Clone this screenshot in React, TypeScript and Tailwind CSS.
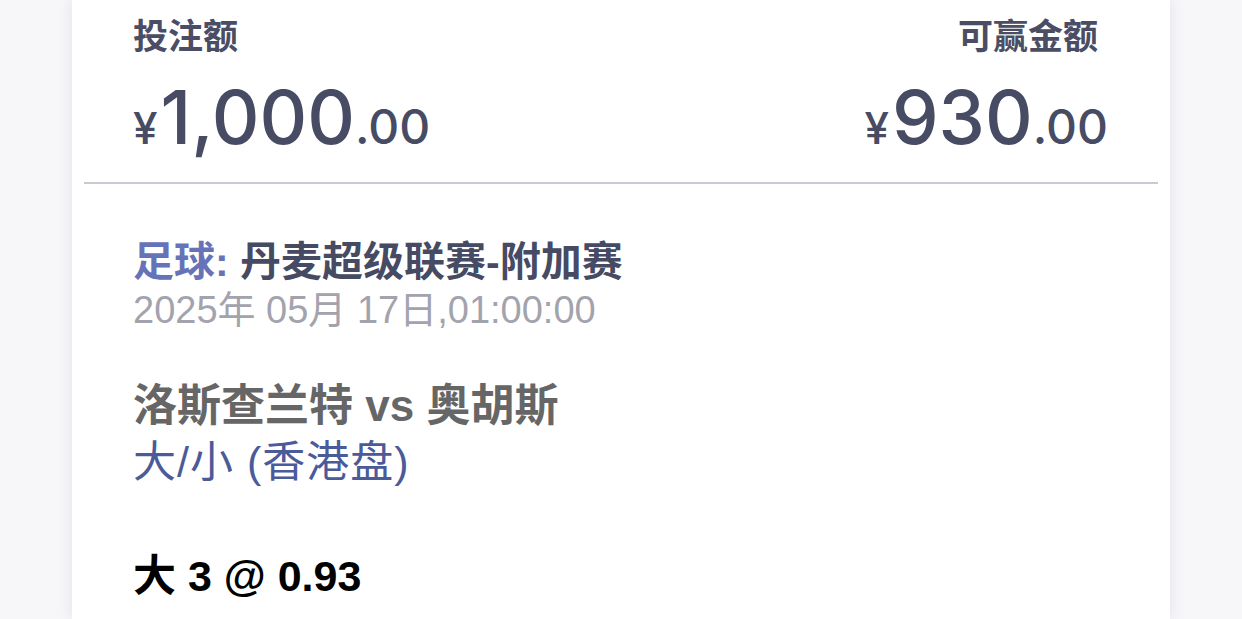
import React from 'react';

const FONT = { fontFamily: '"Liberation Sans", "Noto Sans CJK SC", sans-serif' };
const NUM = { fontFamily: 'Inter, "Liberation Sans", sans-serif' };

function Amount({ whole, cents }: { whole: string; cents: string }) {
  return (
    <div className="flex items-baseline h-[76px] leading-none font-medium text-[#474b63]" style={NUM}>
      <span className="text-[44px] mr-[3px]">¥</span>
      <span className="text-[74px]">{whole}</span>
      <span className="text-[48px]">.{cents}</span>
    </div>
  );
}

export default function App() {
  return (
    <div className="w-[1242px] h-[619px] overflow-hidden bg-[#f7f7fa]" style={FONT}>
      <div className="mx-[72px] h-full bg-white shadow-[0_0_14px_rgba(120,125,160,0.18)]">
        {/* 金额 */}
        <div className="flex justify-between pl-[61px] pr-[62px] pt-[16px]">
          <div className="flex flex-col">
            <div className="text-[35px] leading-[42px] font-semibold text-[#4a4d64]">投注额</div>
            <div className="mt-[22px]">
              <Amount whole="1,000" cents="00" />
            </div>
          </div>
          <div className="flex flex-col items-end">
            <div className="text-[35px] leading-[42px] font-semibold text-[#4a4d64] mr-[10px]">可赢金额</div>
            <div className="mt-[22px]">
              <Amount whole="930" cents="00" />
            </div>
          </div>
        </div>

        <div className="mx-[12px] mt-[26px] h-[2px] bg-[#c9c9d2]" />

        {/* 赛事信息 */}
        <div className="pl-[61px] pt-[53px]">
          <div className="text-[41px] leading-[50px] font-semibold text-[#464a63]">
            <span className="text-[#6673b8]">足球:</span> 丹麦超级联赛-附加赛
          </div>
          <div className="text-[38px] leading-[46px] text-[#a3a3ad]">2025年 05月 17日,01:00:00</div>

          <div className="mt-[48px] text-[44px] leading-[50px] font-semibold text-[#666666]">洛斯查兰特 vs 奥胡斯</div>
          <div className="mt-[6px] text-[43px] leading-[50px] tracking-[1px] text-[#4b5a99]">大/小 (香港盘)</div>

          <div className="mt-[64px] text-[43px] leading-[50px] font-bold text-black">大 3 @ 0.93</div>
        </div>
      </div>
    </div>
  );
}
